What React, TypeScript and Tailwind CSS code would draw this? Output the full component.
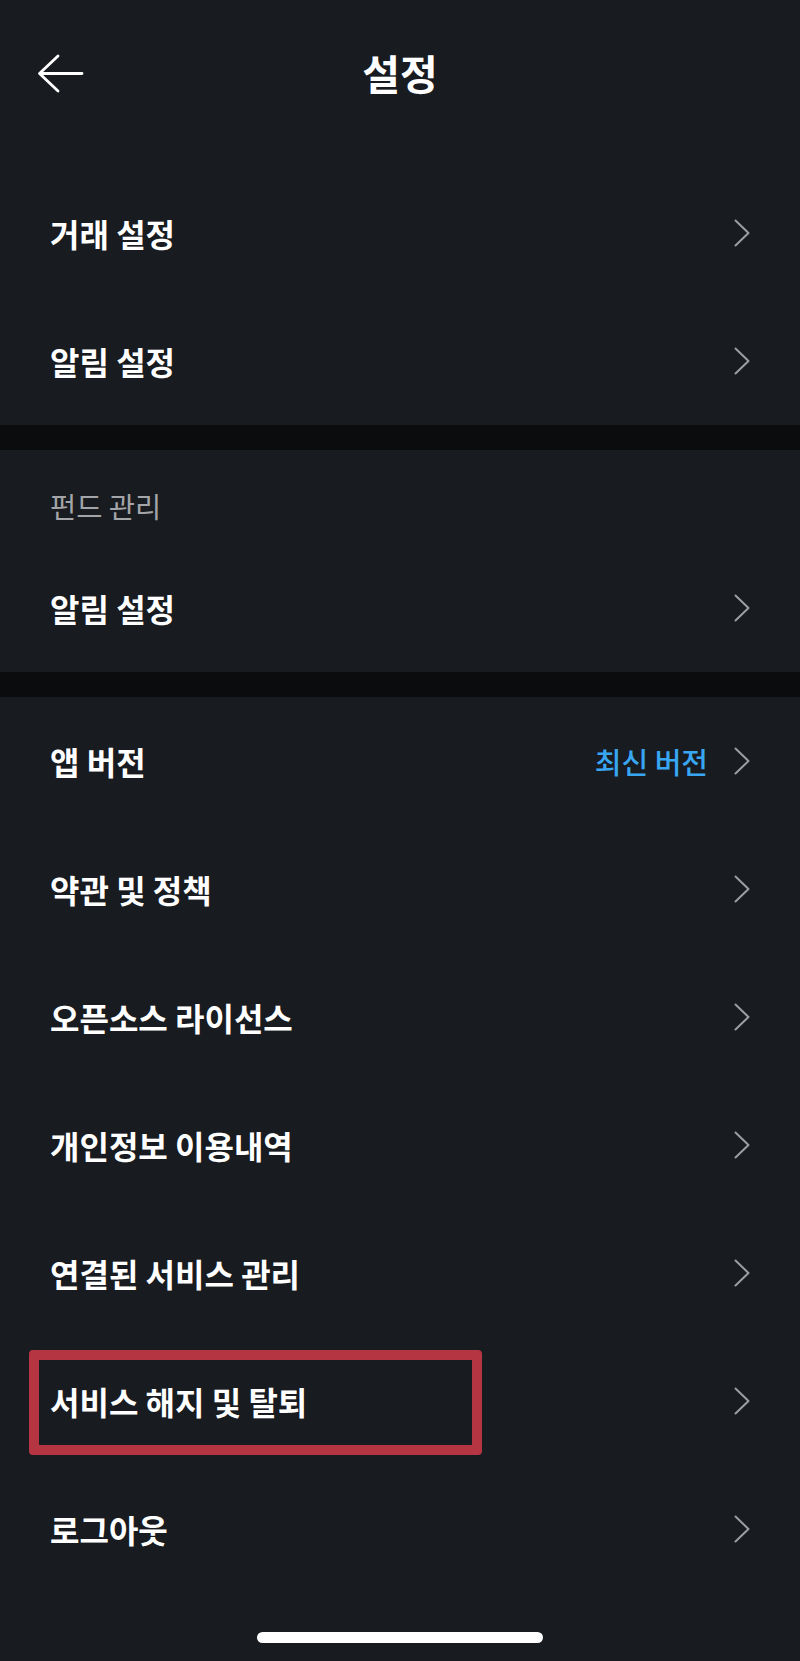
const font = "font-['Noto_Sans_CJK_KR','Noto_Sans',sans-serif]";

function Chevron() {
  return (
    <svg width="16" height="28" viewBox="0 0 16 28" fill="none">
      <path
        d="M1.5 1.5 L14.5 14 L1.5 26.5"
        stroke="#9c9ea1"
        strokeWidth="2"
        strokeLinecap="round"
        strokeLinejoin="round"
      />
    </svg>
  );
}

interface RowProps {
  label: string;
  extra?: string;
  highlight?: boolean;
}

function Row({ label, extra, highlight }: RowProps) {
  return (
    <div className="relative flex h-[128px] items-center justify-between pl-[50px] pr-[50px]">
      <span className="text-[32px] font-bold leading-none text-white">{label}</span>
      <div className="flex items-center gap-[26px]">
        {extra && (
          <span className="text-[29px] font-medium leading-none text-[#38a6f2]">{extra}</span>
        )}
        <Chevron />
      </div>
      {highlight && (
        <div className="absolute left-[29px] top-[13px] h-[105px] w-[453px] rounded-[4px] border-[10px] border-[#b53543]" />
      )}
    </div>
  );
}

function Divider() {
  return <div className="h-[25px] bg-[#0b0c0e]" />;
}

export default function App() {
  return (
    <div className={`min-h-[1661px] w-full bg-[#181b1f] ${font}`}>
      <header className="grid h-[145px] grid-cols-[1fr_auto_1fr] items-center">
        <div className="pl-[36px] pt-[3px]">
          <svg width="48" height="40" viewBox="0 0 48 40" fill="none">
            <path
              d="M22 2 L3.5 19.5 L22 37 M4 19.5 H46"
              stroke="white"
              strokeWidth="2.8"
              strokeLinecap="round"
              strokeLinejoin="round"
            />
          </svg>
        </div>
        <h1 className="text-[41px] font-bold leading-none text-white">설정</h1>
        <div />
      </header>

      <div className="h-[24px]" />
      <Row label="거래 설정" />
      <Row label="알림 설정" />
      <Divider />

      <div className="h-[94px] pl-[50px] pt-[40px]">
        <span className="text-[28.5px] leading-[32px] text-[#a3a5a8]">펀드 관리</span>
      </div>
      <Row label="알림 설정" />
      <Divider />

      <Row label="앱 버전" extra="최신 버전" />
      <Row label="약관 및 정책" />
      <Row label="오픈소스 라이선스" />
      <Row label="개인정보 이용내역" />
      <Row label="연결된 서비스 관리" />
      <Row label="서비스 해지 및 탈퇴" highlight />
      <Row label="로그아웃" />

      <div className="flex justify-center pb-[17px] pt-[39px]">
        <div className="h-[11px] w-[286px] rounded-full bg-white" />
      </div>
    </div>
  );
}
